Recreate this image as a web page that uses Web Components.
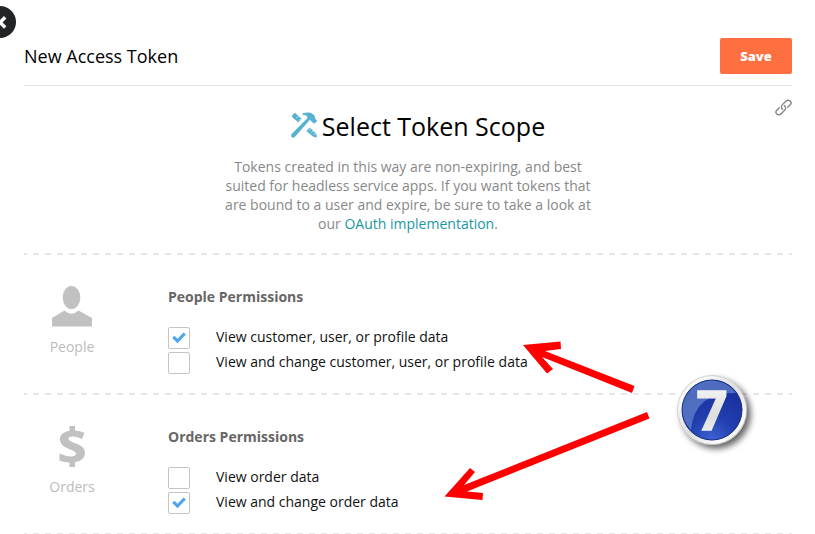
<!DOCTYPE html>
<html lang="en">
<head>
<meta charset="utf-8">
<title>New Access Token</title>
<style>
html, body { margin: 0; background: #fff; }
body { font: 14px/19px "Open Sans", sans-serif; color: #111; overflow: hidden; }
</style>
</head>
<body>
<token-page>
  <page-header slot="header" heading="New Access Token"></page-header>
  <scope-intro heading="Select Token Scope">Tokens created in this way are non-expiring, and best suited for headless service apps. If you want tokens that are bound to a user and expire, be sure to take a look at our <a href="#oauth">OAuth implementation</a>.</scope-intro>
  <permission-group name="People" icon="person">
    <permission-option label="View customer, user, or profile data" checked></permission-option>
    <permission-option label="View and change customer, user, or profile data"></permission-option>
  </permission-group>
  <permission-group name="Orders" icon="dollar">
    <permission-option label="View order data"></permission-option>
    <permission-option label="View and change order data" checked></permission-option>
  </permission-group>
  <dashed-rule></dashed-rule>
  <step-callout slot="overlay" step="7"></step-callout>
</token-page>

<script>
function define(name, markup) {
  customElements.define(name, class extends HTMLElement {
    connectedCallback() {
      if (this.shadowRoot) return;
      const root = this.attachShadow({ mode: 'open' });
      const t = document.createElement('template');
      t.innerHTML = typeof markup === 'function' ? markup(this) : markup;
      root.append(t.content.cloneNode(true));
    }
  });
}

define('token-page', `
<style>
  :host { display: block; position: relative; }
  main { padding: 0 23px 0 24px; }
</style>
<back-button></back-button>
<main><slot name="header"></slot><slot></slot></main>
<slot name="overlay"></slot>`);

define('back-button', `
<style>
  :host { position: absolute; left: -16px; top: 6px; }
  button { display: block; width: 32px; height: 32px; padding: 0; border: 0; border-radius: 50%; background: #222425; }
  svg { display: block; }
</style>
<button type="button" aria-label="Back"><svg width="32" height="32" viewBox="0 0 32 32"><path d="M21.200 11.200l-5.200 5.200 5.200 5.200" fill="none" stroke="#fff" stroke-width="3.500"/></svg></button>`);

define('page-header', el => `
<style>
  :host { display: flex; align-items: center; justify-content: space-between; padding: 38px 0 11px; border-bottom: 1px solid #e4e4e4; }
  h1 { margin: 0; font-size: 18px; line-height: 24px; font-weight: 400; color: #000; }
  button { width: 72px; height: 36px; padding: 0; border: 0; border-radius: 2px; background: #ff7040; color: #fff; font: 800 13px/18px "Open Sans", sans-serif; }
</style>
<h1>${el.getAttribute('heading')}</h1><button type="button">Save</button>`);

define('scope-intro', el => `
<style>
  :host { display: block; position: relative; padding: 22px 0 20px; text-align: center; }
  .title { display: flex; justify-content: center; align-items: center; gap: 5px; padding-left: 20px; margin-bottom: 13px; }
  h2 { margin: 0; font-size: 25px; line-height: 36px; font-weight: 400; color: #000; }
  .title svg { margin-bottom: 2px; }
  p { max-width: 384px; margin: 0 auto; color: #888; }
  ::slotted(a) { color: #2196a3; text-decoration: none; }
  .link { position: absolute; right: 0; top: 13px; line-height: 0; }
</style>
<div class="title">
  <svg width="26" height="26" viewBox="0 0 26 26" fill="#55b1cf"><path d="M.8 3.700L4 .8 10.700 7 7.300 10.300 1.500 5.500zM18.700 15.500L25.300 21.700 26 25.500 22.300 24.700 15.300 19z"/><path d="M11.800 1.600Q17 .2 20 1.200 24 2.800 24 7L26 8.800 23 11.400 18.800 7.500 4 24.500Q2.400 26 1 25 -.3 23.800.9 22L16.800 6 16.300 3.800Q14.500 2.500 11.800 2.700z" stroke="#55b1cf" stroke-width=".6"/><path d="M5.500 6l1.500-1.500M8 8.500L9.500 7M18 18.500l2-2M20.500 20.700l2-2M22.800 22.800l1.700-1.700" stroke="#fff" stroke-width=".8"/></svg>
  <h2>${el.getAttribute('heading')}</h2>
</div>
<p><slot></slot></p>
<a class="link" href="#link" aria-label="Link"><svg width="17" height="17" viewBox="0 0 16 16" fill="none" stroke="#858585" stroke-width="1.300" stroke-linecap="round"><path d="M7.200 9.800C5.600 8.400 5.700 6.600 7 5.300l3.200-3.200C12.400-.1 16.900 2.500 14.500 5.200l-2.500 2.600"/><path d="M8.800 6.200c1.600 1.400 1.500 3.200.2 4.500l-3.200 3.200C3.600 16.100-.9 13.500 1.500 10.800l2.500-2.600"/></svg></a>`);

define('dashed-rule', `
<style>
  :host { display: block; height: 2px; background: repeating-linear-gradient(90deg, #e6e6e6 0 6px, transparent 6px 12px) -3px 0 / calc(100% + 3px) 2px; }
</style>`);

const ICONS = {
  person: '<svg width="40" height="41" viewBox="0 0 40 41" fill="#c1c1c1"><ellipse cx="19.500" cy="11.500" rx="8.800" ry="11.500"/><path d="M0 40.500V32L12.500 24.500Q19.500 31 26.500 24.500L40 32v8.500z"/></svg>',
  dollar: '<svg width="26" height="41" viewBox="0 0 26 41"><path d="M10.500 0H16v4.500Q21 4.700 25.500 6.800L23 13Q18 10.600 14 10.600 9.500 10.600 9.500 13 9.500 14.600 13.500 16.200L17 17.600Q26 21 26 27 26 34.500 16 36.200V41h-5.500v-4.500Q4.500 36.400.5 34.500V27.500Q7 30.400 12 30.400 17 30.400 17 27.700 17 25.800 13 24.200L9.300 22.700Q.8 19.300.8 13.300.8 6.400 10.500 4.800z" fill="#c1c1c1"/></svg>'
};

define('permission-group', el => `
<style>
  :host { display: block; }
  section { display: grid; grid-template-columns: 96px 1fr; column-gap: 48px; padding: 31px 0 16px; }
  .kind { display: flex; flex-direction: column; align-items: center; gap: 10px; color: #bbb; }
  .kind svg { display: block; }
  fieldset { min-width: 0; margin: 0; padding: 0; border: 0; }
  legend { padding: 1px 0 21px; font-weight: 700; color: #666; }
</style>
<dashed-rule></dashed-rule>
<section>
  <div class="kind">${ICONS[el.getAttribute('icon')]}<span>${el.getAttribute('name')}</span></div>
  <fieldset><legend>${el.getAttribute('name')} Permissions</legend><slot></slot></fieldset>
</section>`);

define('permission-option', el => `
<style>
  :host { display: block; }
  label { display: flex; height: 25px; gap: 26px; }
  .box { display: grid; width: 22px; height: 22px; }
  input, svg { grid-area: 1 / 1; }
  input { appearance: none; box-sizing: border-box; width: 22px; height: 22px; margin: 0; border: 1px solid #c4c4c4; border-radius: 2px; background: #fff; }
  svg { visibility: hidden; pointer-events: none; }
  input:checked + svg { visibility: visible; }
</style>
<label><span class="box"><input type="checkbox"${el.hasAttribute('checked') ? ' checked' : ''}><svg width="22" height="22" viewBox="0 0 22 22"><path d="M5.300 9.800l4.200 4.200 7.200-7.500" fill="none" stroke="#4fa5ee" stroke-width="3.200"/></svg></span><span>${el.getAttribute('label')}</span></label>`);

define('step-callout', el => `
<style>
  :host { position: absolute; left: 440px; top: 335px; pointer-events: none; }
  svg { display: block; overflow: visible; }
</style>
<svg width="320" height="170" viewBox="440 335 320 170">
  <defs>
    <linearGradient id="rim" x1="0" y1="0" x2="1" y2="1"><stop offset="0" stop-color="#d4d4d4"/><stop offset=".2" stop-color="#fafafa"/><stop offset=".5" stop-color="#dedede"/><stop offset=".8" stop-color="#fff"/><stop offset="1" stop-color="#bbb"/></linearGradient>
    <radialGradient id="blue" cx=".5" cy="1" r=".8"><stop offset="0" stop-color="#3f63d4"/><stop offset=".5" stop-color="#213ead"/><stop offset="1" stop-color="#1b32a0"/></radialGradient>
    <linearGradient id="digit" x1="0" y1="0" x2="0" y2="1"><stop offset="0" stop-color="#fff"/><stop offset=".6" stop-color="#ddd"/><stop offset="1" stop-color="#fff"/></linearGradient>
    <filter id="shade" x="-30%" y="-30%" width="170%" height="170%"><feDropShadow dx="4" dy="4" stdDeviation="3" flood-color="#000" flood-opacity=".6"/></filter>
  </defs>
  <g fill="#f00">
    <path d="M523 345L560.500 341.500 561 349 545 351 634.500 386 632 393 542 357 553 369 547 373.500z"/>
    <path d="M444.500 496.500L470 468 475 472 464 485 647 412 649.500 418.500 467 491.500 483 493 482.500 500z"/>
  </g>
  <circle cx="712" cy="410" r="34.500" fill="url(#rim)" stroke="#b9b9b9" stroke-width=".6" filter="url(#shade)"/>
  <circle cx="712" cy="410" r="30" fill="url(#blue)" stroke="#142a80" stroke-width="1"/>
  <path d="M682.500 410A29.500 29.500 0 0 1 736 393Q694 392 691 430 682.500 421 682.500 410z" fill="#7295d4" opacity=".6"/>
  <text x="712" y="430" text-anchor="middle" font-family="Open Sans, sans-serif" font-weight="700" font-size="54" fill="url(#digit)" stroke="url(#digit)" stroke-width="1.500">${el.getAttribute('step')}</text>
</svg>`);
</script>
</body>
</html>
